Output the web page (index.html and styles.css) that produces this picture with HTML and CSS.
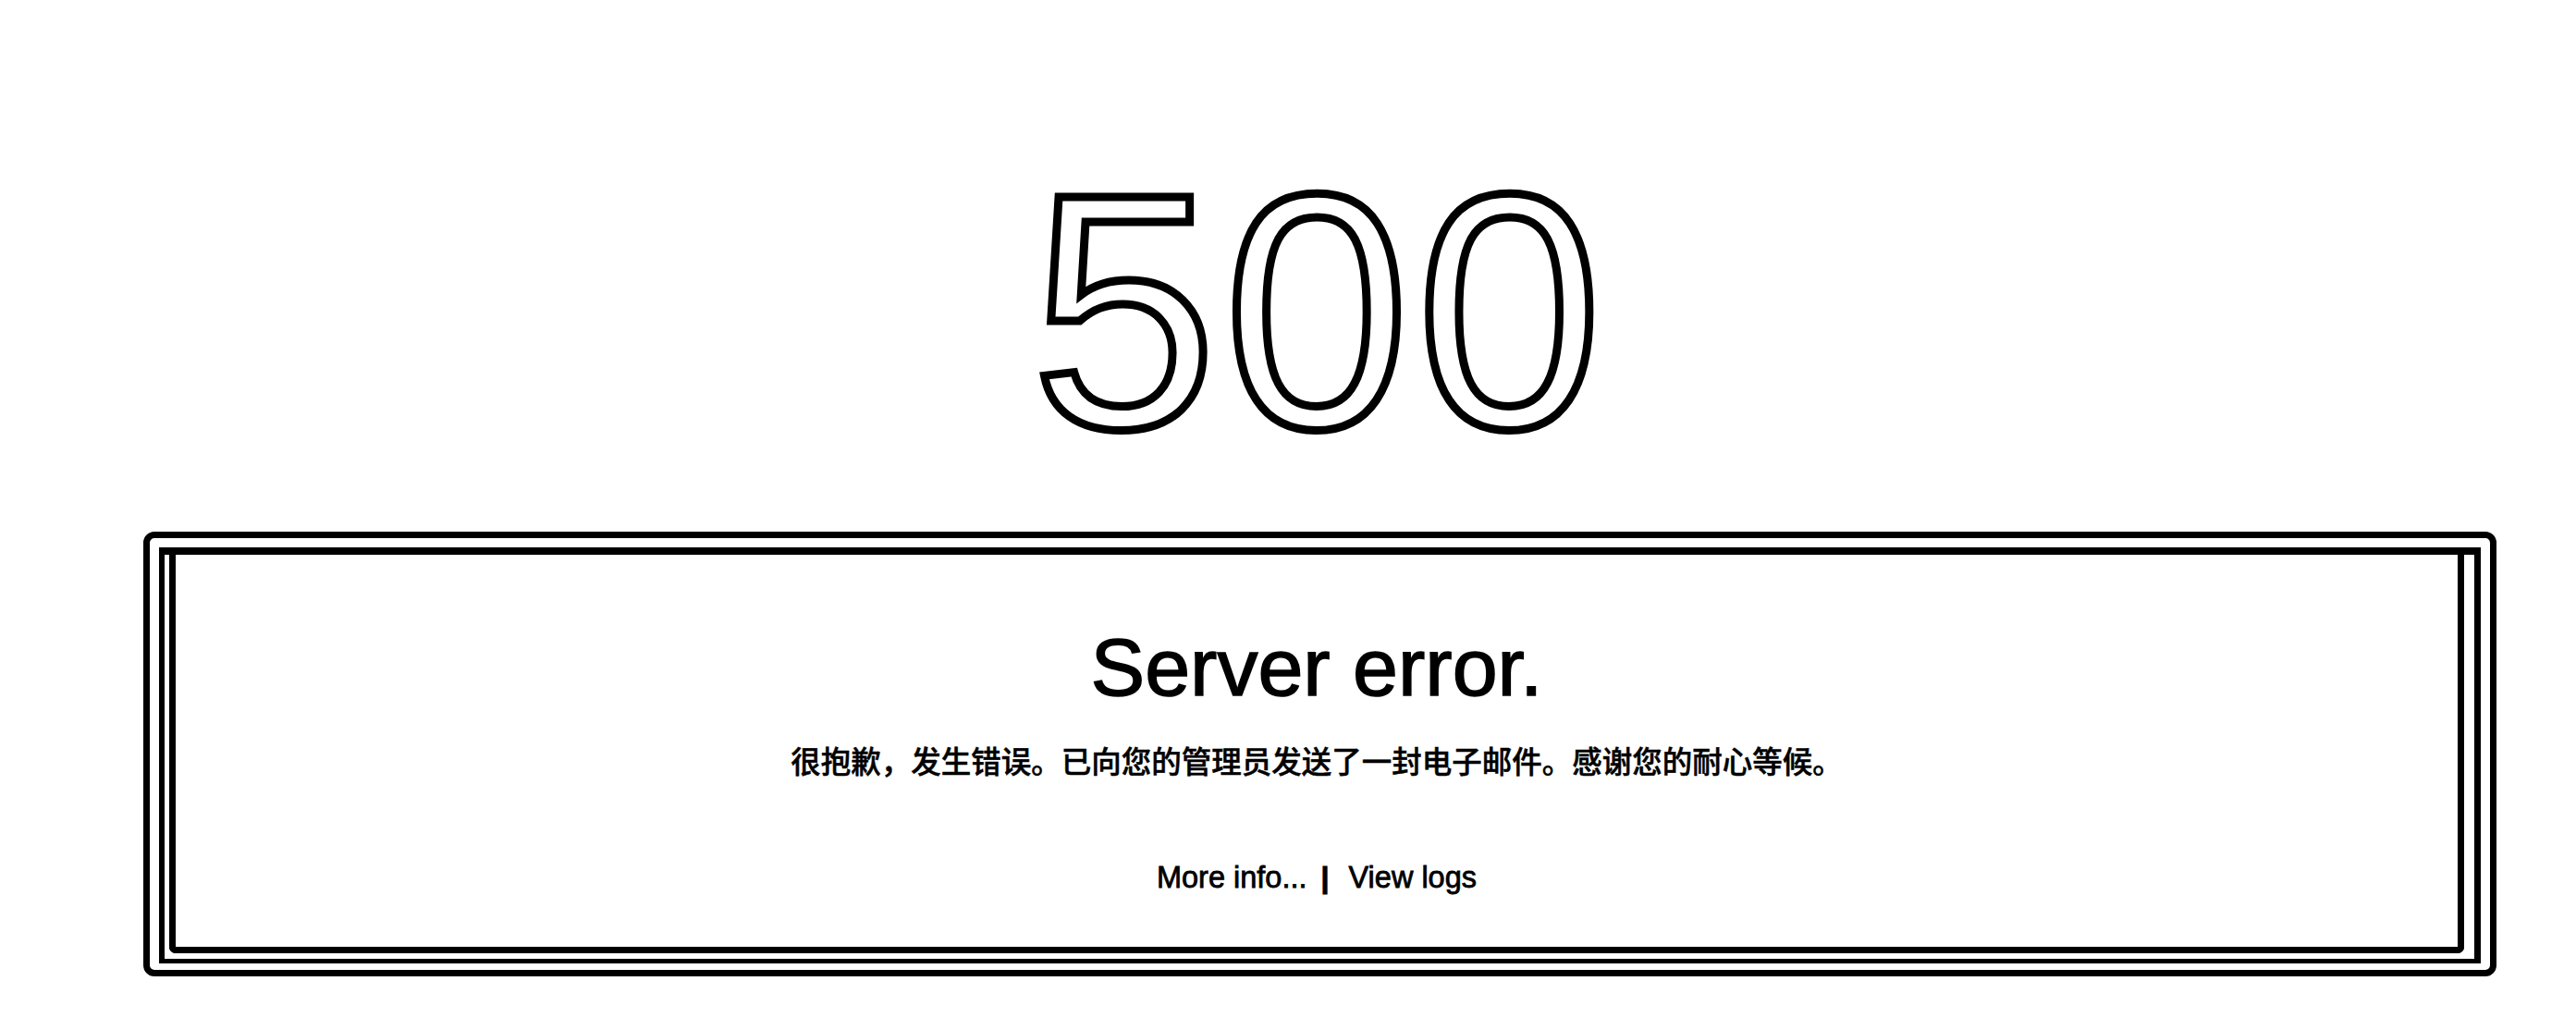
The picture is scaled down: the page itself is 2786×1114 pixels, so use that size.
FILE: index.html
```html
<!DOCTYPE html>
<html lang="zh-CN">
<head>
<meta charset="utf-8">
<title>500 - Server error</title>
<link rel="stylesheet" href="styles.css">
</head>
<body>
<main class="page">
  <div class="code">500</div>
  <section class="card">
    <div class="card-frame">
      <div class="card-body">
        <h1 class="title">Server error.</h1>
        <p class="message">很抱歉，发生错误。已向您的管理员发送了一封电子邮件。感谢您的耐心等候。</p>
        <p class="links"><a class="link" href="#">More info...</a><span class="sep">|</span><a class="link" href="#">View logs</a></p>
      </div>
    </div>
  </section>
</main>
</body>
</html>
```

FILE: styles.css
```css
html, body {
  margin: 0;
  padding: 0;
  background: #ffffff;
}

body {
  font-family: "Liberation Sans", Arial, sans-serif;
  color: #000000;
}

.page {
  width: 2545px;
  margin-left: 155px;
  padding-top: 156px;
}

.code {
  font-size: 362px;
  line-height: 1;
  letter-spacing: 7px;
  text-align: center;
  color: #ffffff;
  -webkit-text-stroke: 9px #000000;
  margin-bottom: 57px;
}

.card {
  border: 7px solid #000000;
  border-radius: 12px;
  padding: 10px 10px 7px 10px;
}

.card-frame {
  border-style: solid;
  border-color: #000000;
  border-width: 8px 7px 5px 6px;
}

.card-body {
  border: 7px solid #000000;
  border-top: 0;
  border-radius: 0 0 7px 7px;
  margin: 0 11px 6px 5px;
  padding: 78px 0 59px;
  text-align: center;
}

.title {
  margin: 0;
  font-size: 88px;
  line-height: 1;
  font-weight: normal;
  -webkit-text-stroke: 1.5px #000000;
}

.message {
  margin: 40px 0 0;
  font-family: "Noto Sans CJK SC", sans-serif;
  font-size: 32.5px;
  line-height: 1;
  font-weight: 500;
  -webkit-text-stroke: 0.5px #000000;
}

.links {
  margin: 94px 0 0;
  font-size: 32.5px;
  line-height: 1;
  -webkit-text-stroke: 0.8px #000000;
}

.link {
  color: #000000;
  text-decoration: none;
}

.sep {
  font-size: 32px;
  line-height: 0;
  font-weight: bold;
  -webkit-text-stroke: 1px #000000;
  margin: 0 21px 0 15px;
}
```
